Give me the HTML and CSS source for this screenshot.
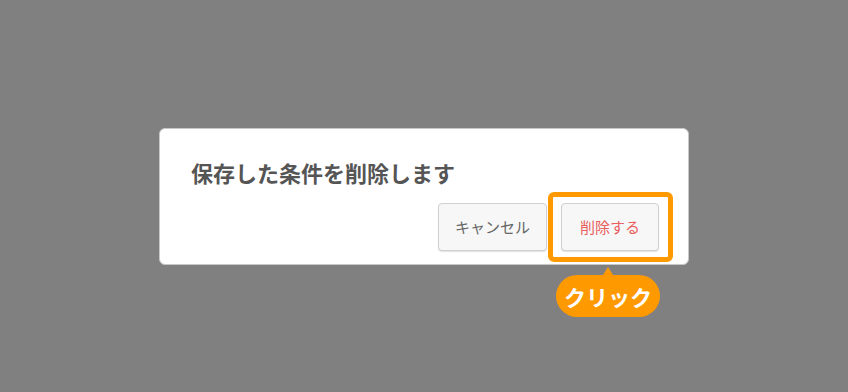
FILE: index.html
```html
<!DOCTYPE html>
<html lang="ja">
<head>
    <meta charset="UTF-8">
    <title>条件の削除</title>
    <link rel="stylesheet" href="styles.css">
</head>
<body>

    <div class="dialog">
        <div class="dialog-title">保存した条件を削除します</div>
        <div class="dialog-actions">
            <button class="btn btn-cancel">キャンセル</button>
            <div class="target">
                <button class="btn btn-danger">削除する</button>
                <div class="highlight"></div>
                <div class="tip">クリック</div>
            </div>
        </div>
    </div>

</body>
</html>
```

FILE: styles.css
```css
body {
    margin: 0;
    height: 100vh;
    background: #808080;
    font-family: "Noto Sans CJK JP", "Noto Sans", sans-serif;
    display: flex;
    justify-content: center;
    align-items: center;
}

.dialog {
    width: 530px;
    box-sizing: border-box;
    background: white;
    border: 1px solid #c8c8c8;
    border-radius: 6px;
    padding: 27px 29px 13px 31px;
}

.dialog-title {
    font-size: 22px;
    line-height: 33px;
    font-weight: bold;
    color: #555;
}

.dialog-actions {
    display: flex;
    justify-content: flex-end;
    gap: 14px;
    margin-top: 14px;
}

.btn {
    height: 48px;
    padding: 0 18px;
    font-family: inherit;
    font-size: 15px;
    color: #666;
    background: #f7f7f7;
    border: 1px solid #d0d0d0;
    border-radius: 4px;
    box-shadow: 0 1px 1px rgba(0, 0, 0, 0.12);
}

.btn-cancel {
    padding: 0 16px;
}

.btn-danger {
    color: #e8605c;
}

.target {
    position: relative;
}

.highlight {
    position: absolute;
    top: -11px;
    left: -13px;
    right: -14px;
    bottom: -11px;
    border: 5px solid #ff9900;
    border-radius: 6px;
}

.tip {
    position: absolute;
    top: calc(100% + 24px);
    left: -5px;
    width: 104px;
    height: 42px;
    line-height: 42px;
    text-align: center;
    background: #ff9900;
    color: white;
    font-size: 22px;
    font-weight: bold;
    border-radius: 21px;
}

.tip::before {
    content: "";
    position: absolute;
    top: -8px;
    left: 47px;
    border-left: 5px solid transparent;
    border-right: 5px solid transparent;
    border-bottom: 8px solid #ff9900;
}
```
